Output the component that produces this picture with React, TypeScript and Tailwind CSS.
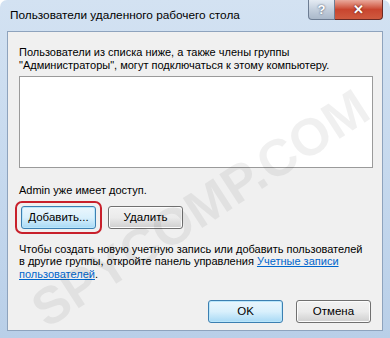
const FONT = { fontFamily: '"Liberation Sans", Arial, sans-serif' };

const WinButton = ({
  label,
  focused = false,
  className = '',
}: {
  label: string;
  focused?: boolean;
  className?: string;
}) => (
  <div
    className={`flex h-[23px] w-[75px] items-center justify-center rounded-[3px] border text-[11.5px] text-black ${
      focused
        ? 'border-[#3c7fb1] bg-gradient-to-b from-[#eaf6fd] via-[#d9f0fc] to-[#a7d9f5] shadow-[inset_0_0_0_1px_#b9e6fb]'
        : 'border-[#707070] bg-gradient-to-b from-[#f2f2f2] via-[#ebebeb] to-[#cfcfcf] shadow-[inset_0_0_0_1px_#fcfcfc]'
    } ${className}`}
  >
    {label}
  </div>
);

const App = () => {
  return (
    <div
      className="relative flex h-[338px] w-[390px] flex-col overflow-hidden rounded-t-[7px] bg-gradient-to-b from-[#d3e2f2] via-[#c6d9ee] to-[#b9cfe8]"
      style={FONT}
    >
      {/* barre de titre */}
      <div className="relative flex h-[31px] shrink-0 items-center pl-[10px] pt-[1px] text-[11.8px] text-black">
        Пользователи удаленного рабочего стола
        <div className="absolute right-[7px] top-0 flex">
          <div className="flex h-[20px] w-[27px] items-center justify-center rounded-bl-[4px] border border-t-0 border-[#6d7d93] bg-gradient-to-b from-[#e4ebf3] via-[#c3cfdd] to-[#aab8ca] text-[13px] font-bold text-white [text-shadow:0_0_2px_#2b3a52]">
            ?
          </div>
          <div className="flex h-[20px] w-[48px] items-center justify-center rounded-br-[4px] border border-l-0 border-t-0 border-[#6b2a24] bg-gradient-to-b from-[#e9a99c] via-[#c9452f] to-[#cf5a3f] text-[13px] font-bold text-white [text-shadow:0_0_2px_#4a0e08]">
            ✕
          </div>
        </div>
      </div>

      {/* zone client */}
      <div className="mx-[7px] flex h-[300px] flex-col border border-[#8ea3bd] bg-[#f0f0f0] px-[11px] pt-[14px] text-[11px] leading-[12.5px] text-black">
        <p>
          Пользователи из списка ниже, а также члены группы
          <br />
          "Администраторы", могут подключаться к этому компьютеру.
        </p>
        <div className="mt-[5px] h-[92px] w-[354px] border border-[#9a9a9a] bg-white" />

        <p className="mt-[16px]">Admin уже имеет доступ.</p>

        <div className="mt-[9px] flex gap-[12px] pl-[2px]">
          <div className="relative">
            <WinButton label="Добавить..." focused />
            <div className="absolute -inset-x-[6px] -inset-y-[5px] rounded-[7px] border-[2.5px] border-[#c8202b]" />
          </div>
          <WinButton label="Удалить" />
        </div>

        <p className="mt-[14px]">
          Чтобы создать новую учетную запись или добавить пользователей в
          другие группы, откройте панель управления{' '}
          <span className="text-[#0066cc] underline">Учетные записи пользователей</span>.
        </p>

        <div className="mt-[20px] flex justify-end gap-[13px]">
          <WinButton label="OK" focused className="h-[22px] w-[73px]" />
          <WinButton label="Отмена" className="h-[22px] w-[73px]" />
        </div>
      </div>

      {/* filigrane */}
      <div className="pointer-events-none absolute left-[200px] top-[208px] -translate-x-1/2 -translate-y-1/2 -rotate-[33deg] whitespace-nowrap text-[52px] font-bold text-[#000]/[0.06]">
        SPYCOMP.COM
      </div>
    </div>
  );
};

export default App;
